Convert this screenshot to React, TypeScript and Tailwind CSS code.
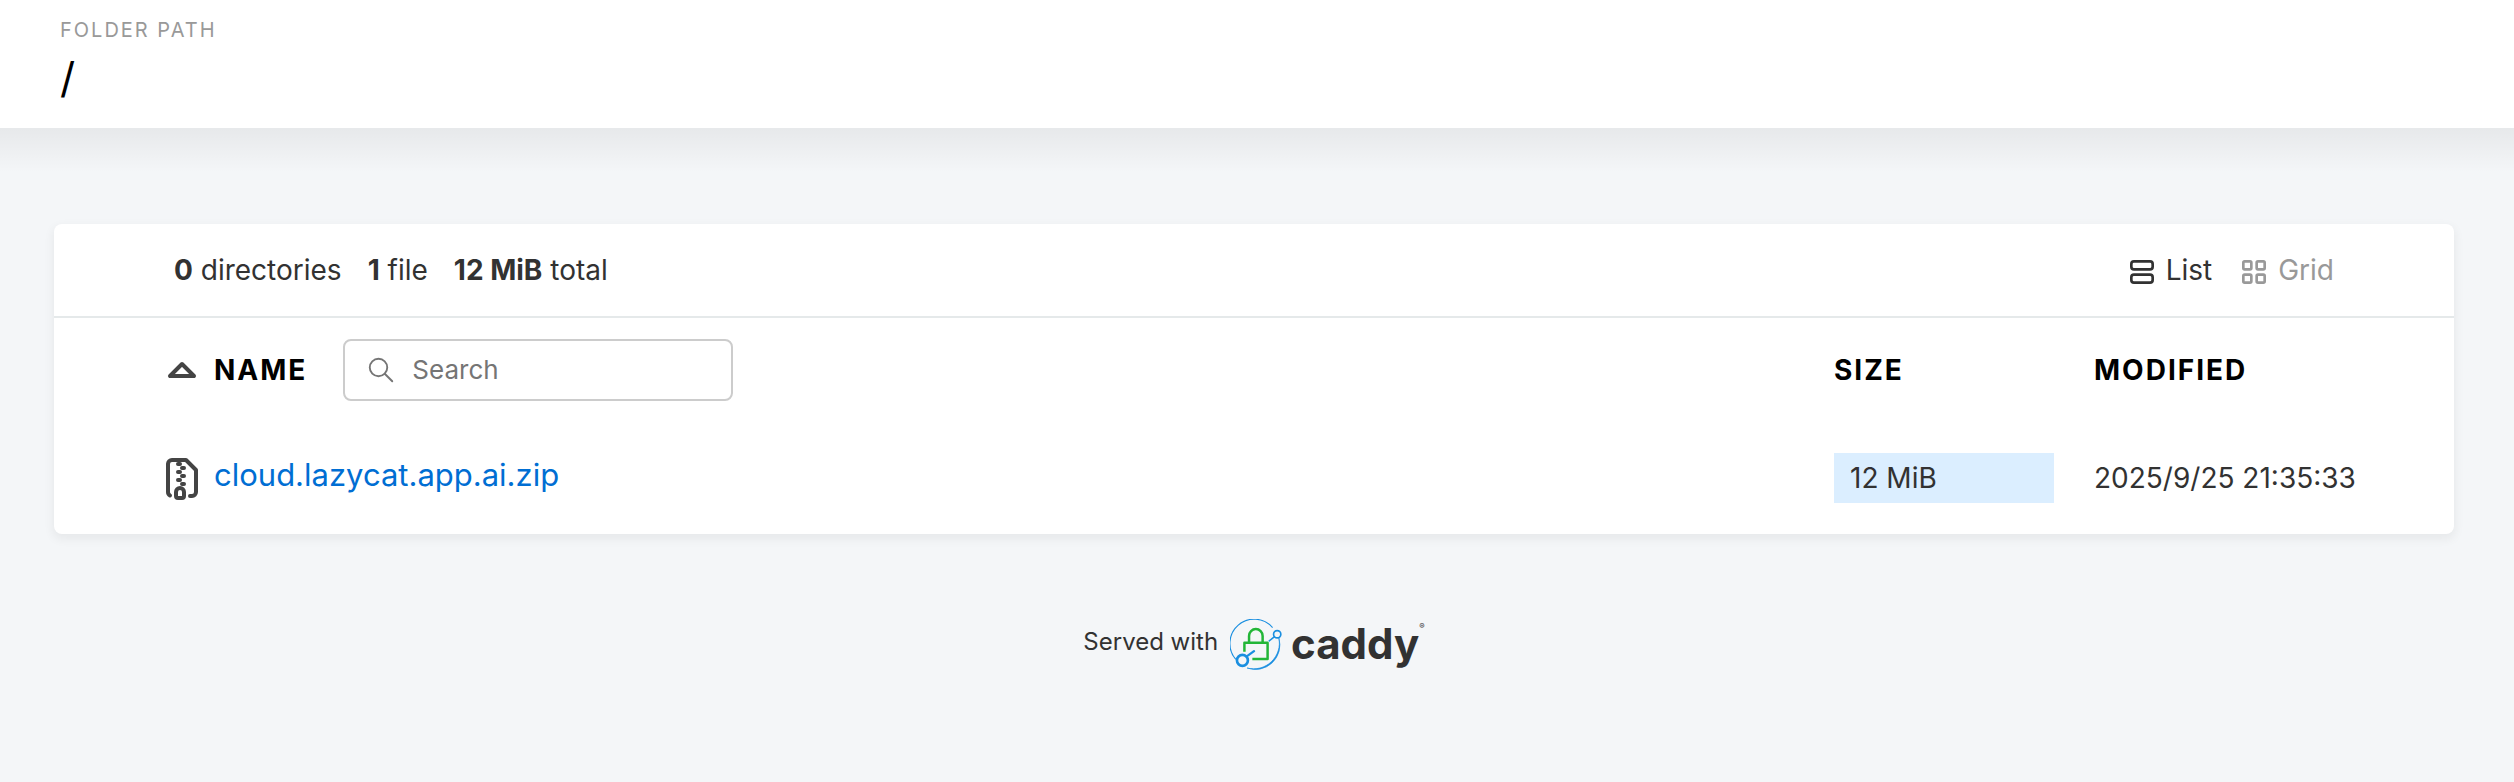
import React from "react";

type IconProps = { className?: string; strokeWidth?: number; children: React.ReactNode };

function Icon({ className, strokeWidth = 2, children }: IconProps) {
  return (
    <svg
      viewBox="0 0 24 24"
      fill="none"
      stroke="currentColor"
      strokeWidth={strokeWidth}
      strokeLinecap="round"
      strokeLinejoin="round"
      aria-hidden="true"
      className={className}
    >
      {children}
    </svg>
  );
}

function CaddyMark() {
  return (
    <svg viewBox="40 25 159 154" fill="none" aria-hidden="true" className="h-[51px] w-[53px] shrink-0">
      <path stroke="#1a8fe0" strokeWidth="3.5" d="M57 147A73 73 0 1 1 168 51" />
      <path
        fill="#1a8fe0"
        stroke="#1a8fe0"
        strokeWidth="2"
        d="M187 82A74 74 0 0 1 91 173A78 78 0 0 0 187 82Z"
      />
      <g stroke="#22b638" strokeWidth="7.5" strokeLinejoin="round">
        <path d="M97 96V76a20.5 20.5 0 0 1 41 0V96" />
        <path d="M83 124V97H153V146H107" />
      </g>
      <g stroke="#1a8fe0" strokeLinecap="round">
        <circle cx="77" cy="150" r="16.5" strokeWidth="8" />
        <path d="M91 137L112 122" strokeWidth="7" />
        <circle cx="182" cy="71" r="11" strokeWidth="5" />
        <path d="M173 79L158 91" strokeWidth="4.5" />
      </g>
    </svg>
  );
}

export default function App() {
  return (
    <div className="min-h-screen bg-[#f4f6f8] font-['Inter','Liberation_Sans',sans-serif] text-[28px] leading-[34px] text-[#323232]">
      <header className="bg-white pr-[6px]">
        <div className="mx-auto h-32 max-w-[2400px] px-[6px] pt-[18px]">
          <div className="text-[20px] leading-6 tracking-[2px] text-[#999]">FOLDER PATH</div>
          <h1 className="pt-3 text-[42px] leading-[48px] text-black">
            <a href="#root">/</a>
          </h1>
        </div>
      </header>

      <div className="bg-[linear-gradient(rgb(0_0_0/0.055),transparent_45px)] pt-24 pr-[6px]">
        <main className="mx-auto max-w-[2400px] rounded-lg bg-white shadow-[0_4px_10px_2px_rgb(0_0_0/0.05)]">
          <div className="flex h-[94px] items-center justify-between border-b-2 border-[#e5e9ea] px-[120px]">
            <div className="flex gap-[26px]">
              <span><b>0</b> directories</span>
              <span><b>1</b> file</span>
              <span><b>12 MiB</b> total</span>
            </div>
            <div className="flex gap-[26px]">
              <a href="#list" className="flex items-center gap-2">
                <Icon className="mt-1 size-8">
                  <rect x="4" y="4" width="16" height="6" rx="2" />
                  <rect x="4" y="14" width="16" height="6" rx="2" />
                </Icon>
                List
              </a>
              <a href="#grid" className="flex items-center gap-2 text-[#999]">
                <Icon className="mt-1 size-8">
                  <rect x="4" y="4" width="6" height="6" rx="1" />
                  <rect x="14" y="4" width="6" height="6" rx="1" />
                  <rect x="4" y="14" width="6" height="6" rx="1" />
                  <rect x="14" y="14" width="6" height="6" rx="1" />
                </Icon>
                Grid
              </a>
            </div>
          </div>

          <table className="w-full table-fixed text-left">
            <colgroup>
              <col />
              <col className="w-[260px]" />
              <col className="w-[360px]" />
            </colgroup>
            <thead>
              <tr className="h-[104px] tracking-[2px] text-black">
                <th className="py-0 pl-[104px]">
                  <div className="flex items-center">
                    <a href="#sort-name" aria-label="Sort by name" className="text-[#444]">
                      <Icon className="size-12">
                        <path d="M18 15l-6 -6l-6 6h12" />
                      </Icon>
                    </a>
                    <a href="#name" className="ml-2">NAME</a>
                    <label className="ml-9 flex h-[62px] w-[390px] items-center rounded-lg border-2 border-[#ccc] pl-[21px] text-[#757575]">
                      <Icon className="size-[30px] shrink-0" strokeWidth={1.5}>
                        <circle cx="10" cy="10" r="7" />
                        <path d="M21 21l-6 -6" />
                      </Icon>
                      <input
                        type="search"
                        aria-label="Search"
                        placeholder="Search"
                        className="ml-4 w-full min-w-0 bg-transparent text-[26px] leading-8 font-normal tracking-normal outline-none placeholder:text-[#757575]"
                      />
                    </label>
                  </div>
                </th>
                <th className="p-0"><a href="#size">SIZE</a></th>
                <th className="p-0"><a href="#modified">MODIFIED</a></th>
              </tr>
            </thead>
            <tbody>
              <tr className="h-28">
                <td className="py-0 pl-[104px]">
                  <a href="#file" className="flex items-center gap-2 text-[31px] leading-10 text-[#006ed3]">
                    <Icon className="size-12 text-[#444]">
                      <path d="M6 20.735a2 2 0 0 1 -1 -1.735v-14a2 2 0 0 1 2 -2h7l5 5v11a2 2 0 0 1 -2 2h-1" />
                      <path d="M11 17a2 2 0 0 1 2 2v2a1 1 0 0 1 -1 1h-2a1 1 0 0 1 -1 -1v-2a2 2 0 0 1 2 -2z" />
                      <path d="M11 5l-1 0M13 7l-1 0M11 9l-1 0M13 11l-1 0M11 13l-1 0M13 15l-1 0" />
                    </Icon>
                    <span className="pb-[6px]">cloud.lazycat.app.ai.zip</span>
                  </a>
                </td>
                <td className="p-0">
                  <div className="mr-10 bg-[#dbeeff] px-4 py-2">12 MiB</div>
                </td>
                <td className="p-0"><time>2025/9/25 21:35:33</time></td>
              </tr>
            </tbody>
          </table>
        </main>
      </div>

      <footer className="flex items-center justify-center pt-[82px] pr-[6px] text-[24px] leading-[52px]">
        <span className="pr-3 pb-1">Served with</span>
        <a href="#caddy" className="flex items-center">
          <CaddyMark />
          <span className="ml-2 text-[42px] leading-[52px] font-bold">caddy</span>
          <span className="self-start text-[8px] leading-4">®</span>
        </a>
      </footer>
    </div>
  );
}
